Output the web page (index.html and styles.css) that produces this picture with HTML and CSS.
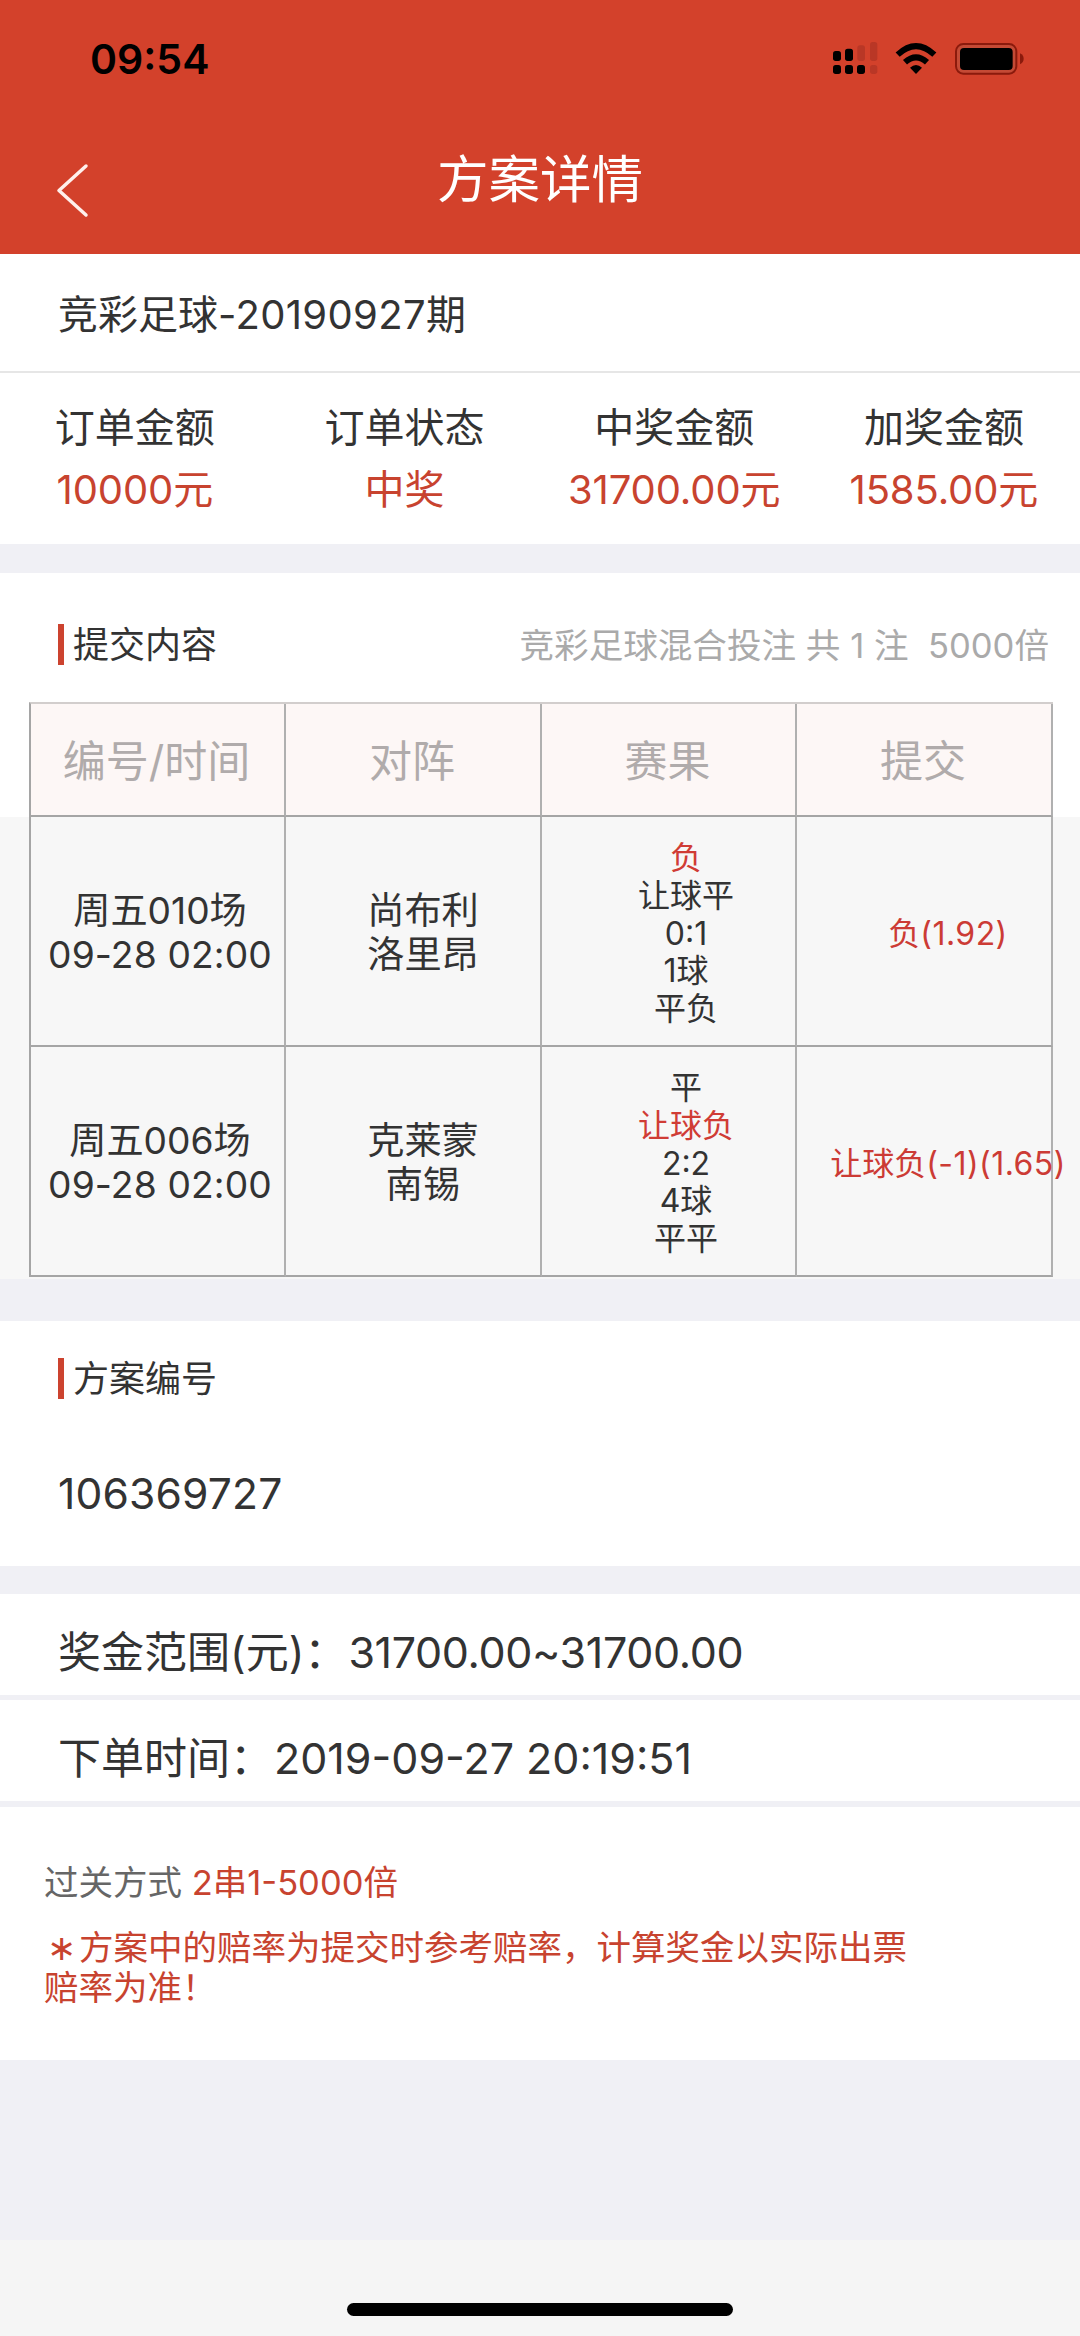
FILE: index.html
```html
<!DOCTYPE html>
<html lang="zh-CN">
<head>
<meta charset="utf-8">
<title>方案详情</title>
<link rel="stylesheet" href="styles.css">
</head>
<body>
<header class="header">
  <div class="status">
    <span class="clock">09:54</span>
    <svg class="status-icons" viewBox="0 0 900 240" width="300" height="80">
      <g fill="#000">
        <rect x="159" y="93" width="24" height="30" rx="8"/>
        <rect x="195" y="86" width="24" height="37" rx="8"/>
        <rect x="159" y="135" width="24" height="27" rx="8"/>
        <rect x="195" y="135" width="24" height="27" rx="8"/>
        <rect x="231" y="135" width="24" height="27" rx="8"/>
      </g>
      <g fill="#b93726">
        <rect x="232" y="76" width="23" height="47" rx="8"/>
        <rect x="270" y="66" width="22" height="57" rx="8"/>
        <rect x="270" y="135" width="22" height="27" rx="8"/>
      </g>
      <g fill="none" stroke="#000" stroke-width="18">
        <path d="M353 104Q408 53 463 104"/>
        <path d="M375 127Q408 97 441 127"/>
      </g>
      <path d="M390 143Q408 127 426 143L408 162Z"/>
      <rect x="528" y="72" width="181" height="89" rx="22" fill="#c44a35" stroke="#8b1a0c" stroke-width="6"/>
      <rect x="540" y="84" width="158" height="66" rx="12"/>
      <path d="M720 100Q731 106 731 116Q731 127 720 133Z" fill="#8b1a0c"/>
    </svg>
  </div>
  <div class="nav">
    <svg class="back" viewBox="0 0 34 56" width="34" height="56"><path d="M31 3L4 27.5L31 52" fill="none" stroke="#fff0ec" stroke-width="3.5" stroke-linecap="round" stroke-linejoin="round"/></svg>
    <h1 class="title">方案详情</h1>
  </div>
</header>
<main>
  <section class="issue">竞彩足球<span class="issue-no">-20190927</span>期</section>
  <section class="summary">
    <div class="stat"><span>订单金额</span><b><i>10000</i>元</b></div>
    <div class="stat"><span>订单状态</span><b>中奖</b></div>
    <div class="stat"><span>中奖金额</span><b><i>31700.00</i>元</b></div>
    <div class="stat"><span>加奖金额</span><b><i>1585.00</i>元</b></div>
  </section>
  <section class="content">
    <div class="section-head">
      <h2 class="label">提交内容</h2>
      <span class="bet">竞彩足球混合投注 共 1 注&nbsp; 5000倍</span>
    </div>
    <div class="grid grid-head">
      <div>编号/时间</div><div>对阵</div><div>赛果</div><div>提交</div>
    </div>
    <div class="rows">
      <div class="grid grid-row">
        <div class="when"><span>周五010场</span><span class="date">09-28 02:00</span></div>
        <div class="teams">尚布利<br>洛里昂</div>
        <div class="result"><em>负</em><span>让球平</span><span>0:1</span><span>1球</span><span>平负</span></div>
        <div class="pick"><span>负<i>(1.92)</i></span></div>
      </div>
      <div class="grid grid-row">
        <div class="when"><span>周五006场</span><span class="date">09-28 02:00</span></div>
        <div class="teams">克莱蒙<br>南锡</div>
        <div class="result"><span>平</span><em>让球负</em><span>2:2</span><span>4球</span><span>平平</span></div>
        <div class="pick"><span>让球负<i>(-1)(1.65)</i></span></div>
      </div>
    </div>
  </section>
  <section class="plan">
    <h2 class="label">方案编号</h2>
    <p class="plan-no">106369727</p>
  </section>
  <section class="line line-prize"><span class="key">奖金范围(元)：</span><span class="prize">31700.00~31700.00</span></section>
  <section class="line line-time"><span class="key">下单时间：</span><span class="time">2019-09-27 20:19:51</span></section>
  <section class="notes">
    <p class="mode">过关方式 <em>2串1-5000倍</em></p>
    <p class="tip"><span class="star">∗</span>方案中的赔率为提交时参考赔率，计算奖金以实际出票<br>赔率为准！</p>
  </section>
</main>
<footer class="footer"><div class="home-bar"></div></footer>
</body>
</html>
```
FILE: styles.css
```css
* { box-sizing: border-box; margin: 0; padding: 0; }
body {
  width: 1080px;
  height: 2336px;
  display: flex;
  flex-direction: column;
  overflow: hidden;
  background: #f0f0f5;
  color: #333;
  font-family: Inter, "Noto Sans CJK SC", sans-serif;
  font-weight: 400;
}
h1, h2, b { font-weight: 400; }
em, i { font-style: normal; }
main { flex: 1; }

.header { height: 254px; background: #d3412b; }
.status { height: 120px; display: flex; justify-content: space-between; padding-left: 90px; }
.clock { font-size: 41px; line-height: 119px; font-weight: 600; color: #000; }
.status-icons { margin-top: 20px; }
.nav { height: 134px; display: grid; grid-template-columns: 1fr auto 1fr; }
.back { margin: 43px 0 0 55px; }
.title { color: #fff; font-size: 51.5px; line-height: 60px; margin-top: 29px; }

.issue { height: 119px; padding-left: 58px; background: #fff; border-bottom: 2px solid #e6e6e6; font-size: 40px; line-height: 121px; }
.issue-no { letter-spacing: .35px; }

.summary { height: 171px; display: grid; grid-template-columns: repeat(4, 269.7px); padding-top: 24px; background: #fff; }
.stat { display: flex; flex-direction: column; align-items: center; font-size: 40px; line-height: 62px; }
.stat b { color: #c8432f; }
.stat i { letter-spacing: -.1px; }

.content { margin-top: 29px; background: #fff; }
.section-head { height: 129px; padding: 51px 31px 0 58px; display: flex; justify-content: space-between; align-items: flex-start; }
.label { height: 41px; border-left: 6px solid #cc432f; padding-left: 9px; font-size: 36px; line-height: 43px; }
.bet { font-size: 34.6px; line-height: 42px; color: #aaa; white-space: pre; }

.grid { display: grid; grid-template-columns: 255px 256px 255px 256px; width: 1024px; margin-left: 29px; border-left: 2px solid #a5a5a5; }
.grid > div { border-right: 2px solid #b0b0b0; border-bottom: 2px solid #a5a5a5; white-space: nowrap; }
.grid-head { height: 115px; background: #fdf7f6; border-top: 2px solid #d2cecd; color: #b0abab; font-size: 43px; }
.grid-head > div { height: 113px; padding-right: 2px; line-height: 115px; text-align: center; }
.rows { background: #f7f7f7; padding-bottom: 2px; }
.grid-row { height: 230px; }
.grid-row > div { display: flex; flex-direction: column; align-items: center; justify-content: center; text-align: center; }
.grid-row .when, .grid-row .teams { font-size: 37.2px; line-height: 44px; padding-top: 4px; }
.grid-row .when { padding-left: 5px; }
.grid-row .date { letter-spacing: .15px; }
.grid-row .teams { padding-left: 20px; }
.grid-row .result { font-size: 32px; line-height: 37.8px; padding-left: 35px; padding-top: 5px; }
.grid-row .pick { font-size: 32px; padding-left: 48px; color: #cc3b35; }
.pick i { letter-spacing: .45px; }
.result em { color: #d03c35; }

.plan { height: 245px; margin-top: 42px; padding: 37px 58px; background: #fff; }
.plan-no { margin-top: 70px; font-size: 42.6px; line-height: 50px; letter-spacing: .15px; }

.line { background: #fff; padding-left: 58px; font-size: 43px; display: flex; }
.line-prize { margin-top: 28px; height: 101px; line-height: 116px; }
.prize { margin-left: 1px; letter-spacing: -.35px; }
.line-time { margin-top: 5px; height: 101px; line-height: 117px; }
.time { margin-left: 1px; }

.notes { margin-top: 6px; height: 253px; background: #fff; padding: 56px 44px; font-size: 34.5px; line-height: 40px; }
.mode { color: #666; }
.mode em, .tip { color: #c8432f; }
.tip { margin-top: 25px; }
.star { display: inline-block; width: 35px; padding-left: 3px; line-height: 1; }

.footer { height: 96px; background: #f5f5f5; padding-top: 63px; }
.home-bar { width: 386px; height: 13px; margin: 0 auto; border-radius: 7px; background: #000; }
```
